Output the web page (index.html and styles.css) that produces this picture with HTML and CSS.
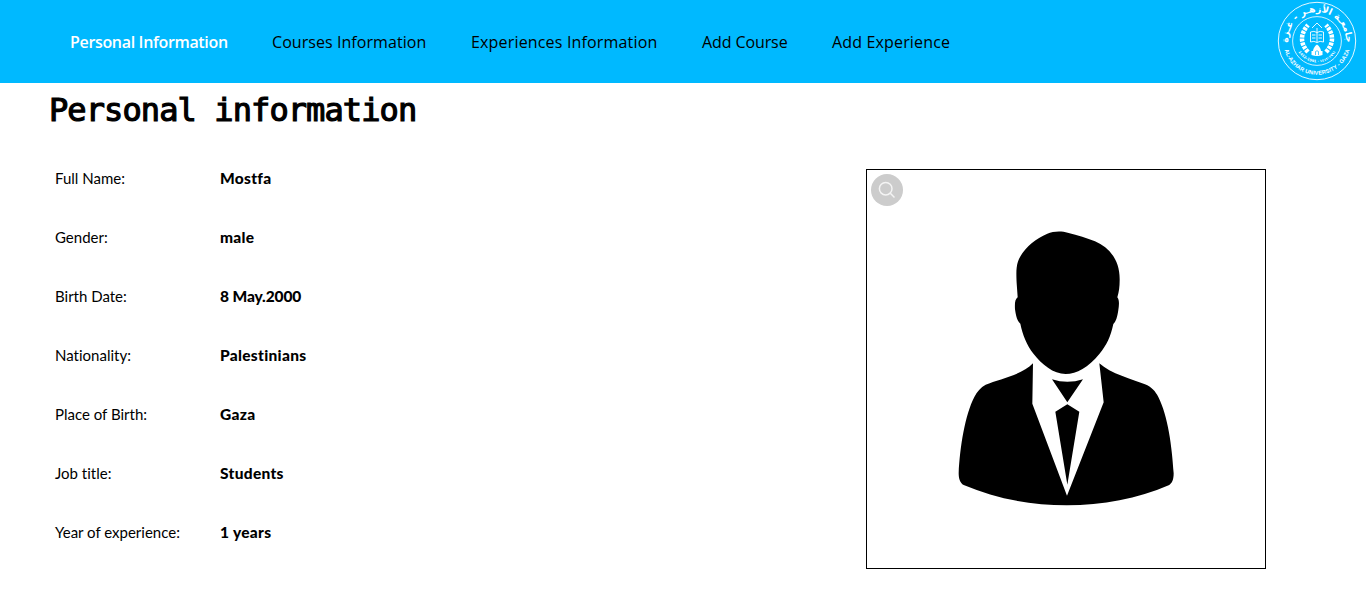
FILE: index.html
```html
<!DOCTYPE html>
<html lang="en">
<head>
<meta charset="utf-8">
<title>Personal information</title>
<link rel="stylesheet" href="styles.css">
</head>
<body>
<header class="navbar">
  <nav class="menu">
    <a class="link link-active">Personal Information</a>
    <a class="link link-courses">Courses Information</a>
    <a class="link link-experiences">Experiences Information</a>
    <a class="link link-add-course">Add Course</a>
    <a class="link link-add-experience">Add Experience</a>
  </nav>
  <svg class="logo" viewBox="0 0 80 80" fill="none" stroke="#fff">
    <defs>
      <path id="arc-top" d="M11 40 A29 29 0 0 1 69 40"/>
      <path id="arc-bottom" d="M6.300 40 A33.700 33.700 0 0 0 73.700 40"/>
      <path id="arc-years" d="M18.500 40 A21.500 21.500 0 0 0 61.500 40"/>
    </defs>
    <circle cx="40" cy="40" r="38.7" stroke-width=".9"/>
    <circle cx="40" cy="40" r="24.4" stroke-width=".8"/>
    <g fill="#fff" stroke="none">
      <text class="logo-arabic" text-anchor="middle"><textPath href="#arc-top" startOffset="50%">جامعـة الأزهـر - غـزة</textPath></text>
      <text class="logo-latin" text-anchor="middle"><textPath href="#arc-bottom" startOffset="50%">AL-AZHAR UNIVERSITY - GAZA</textPath></text>
      <text class="logo-years" text-anchor="middle"><textPath href="#arc-years" startOffset="50%">1412-1991 · ١٩٩١-١٤١٢</textPath></text>
    </g>
    <g stroke-width="4.5" stroke-dasharray="3 1">
      <path d="M31 51 Q19 38 31 24"/>
      <path d="M49 51 Q61 38 49 24"/>
    </g>
    <path d="M33.500 31 Q37 29.500 40 31.500 Q43 29.500 46.500 31 V41 Q43 39.500 40 41.500 Q37 39.500 33.500 41Z M40 27 V41.500 M35 34 H38.500 M35 37 H38.500 M41.500 34 H45 M41.500 37 H45 M35 27 L40 22 L45 27" stroke-width=".9"/>
    <path d="M34.500 54 V50 H36 Q36.500 46 40 43.500 Q43.500 46 44 50 H45.500 V54 Q40 56 34.500 54Z" fill="#fff" stroke="none"/>
    <path d="M38.500 54 V50.500 Q40 49 41.500 50.500 V54" stroke="#00b9ff" stroke-width=".7"/>
  </svg>
</header>
<main class="content">
  <h1 class="title">Personal information</h1>
  <div class="profile">
    <dl class="details">
      <dt>Full Name:</dt><dd>Mostfa</dd>
      <dt>Gender:</dt><dd>male</dd>
      <dt>Birth Date:</dt><dd class="date">8 May.2000</dd>
      <dt>Nationality:</dt><dd>Palestinians</dd>
      <dt>Place of Birth:</dt><dd>Gaza</dd>
      <dt>Job title:</dt><dd>Students</dd>
      <dt>Year of experience:</dt><dd>1 years</dd>
    </dl>
    <div class="photo">
      <svg class="portrait" viewBox="867 170 398 398">
        <g transform="translate(940 220) scale(.33333)">
          <path d="M322 41 C340 33 366 33 383 38 C415 46 440 53 465 64 C508 82 540 120 539 180 C539 200 537 216 532 232 C539 240 537 258 535 270 C532 290 528 305 520 312 C512 350 500 375 478 402 C445 442 410 462 377 462 C340 462 305 433 281 402 C260 375 248 345 241 311 C231 303 228 288 225 268 C224 250 225 238 233 232 L230 190 C228 150 229 135 238 115 C252 86 285 56 322 41Z"/>
        </g>
        <g transform="translate(940 350) scale(.33333)">
          <path d="M279 40 L277 161 L381 437 L491 157 L478 40 C510 70 580 90 615 103 C635 111 646 124 655 141 C684 198 696 290 701 370 C701 388 697 400 686 406 C500 486 260 486 71 405 C60 400 56 385 56 370 C60 290 75 195 103 141 C111 125 122 112 137 104 C178 87 246 75 279 40Z"/>
          <path d="M336 88 Q382 103 429 88 L382 157Z M382 163 L418 185 L382 404 L346 185Z"/>
        </g>
      </svg>
      <svg class="magnifier" viewBox="0 0 32 32" fill="none" stroke="#f4f4f4" stroke-width="1.5">
        <circle cx="16" cy="16" r="16" fill="#ccc" stroke="none"/>
        <circle cx="14.700" cy="14.700" r="6.300"/>
        <path d="M19.300 19.300 L23.500 23.500"/>
      </svg>
    </div>
  </div>
</main>
</body>
</html>
```
FILE: styles.css
```css
* { box-sizing: border-box; }

body {
  margin: 0;
  background: #fff;
  color: #000;
  font-family: "Gill Sans", Lato, sans-serif;
  overflow: hidden;
}

.navbar {
  display: flex;
  justify-content: space-between;
  align-items: center;
  height: 83px;
  padding: 0 9px 2px 70px;
  background: #00b9ff;
}

.menu {
  display: flex;
  gap: 45px;
  font: 16px/24px "Comic Sans MS", "Open Sans", sans-serif;
  padding-top: 3px;
}

.link { white-space: nowrap; }
.link-active { color: #fff; font-weight: 600; width: 157px; letter-spacing: -.33px; }
.link-courses { width: 154px; letter-spacing: .06px; }
.link-experiences { width: 186px; letter-spacing: .17px; }
.link-add-course { width: 85px; letter-spacing: -.1px; }
.link-add-experience { width: 118px; letter-spacing: .16px; }

.logo { width: 80px; height: 80px; }
.logo-arabic { font: bold 9.2px "DejaVu Sans", sans-serif; }
.logo-latin { font: bold 5.6px "Liberation Sans", sans-serif; letter-spacing: .12px; }
.logo-years { font: bold 3.6px "DejaVu Sans", sans-serif; }

.content { padding: 8px 100px 0 49px; }

.title {
  margin: 0;
  font: 32px/38px "DejaVu Sans Mono", monospace;
  letter-spacing: -.9px;
  -webkit-text-stroke: 1.2px #000;
}

.profile {
  display: flex;
  justify-content: space-between;
  padding-top: 39px;
}

.details {
  display: grid;
  grid-template-columns: 165px auto;
  grid-auto-rows: 59px;
  margin: 0;
  padding-left: 6px;
  font-size: 15px;
  line-height: 20px;
  font-variant-ligatures: none;
}

.details dd { margin: 0; font-weight: 900; font-size: 15.5px; letter-spacing: .3px; }
.details .date { letter-spacing: -.1px; }

.photo {
  position: relative;
  width: 400px;
  height: 400px;
  margin-top: 1px;
  border: 1px solid #000;
}

.portrait { display: block; width: 398px; height: 398px; }
.magnifier { position: absolute; top: 4px; left: 4px; width: 32px; height: 32px; }
```
